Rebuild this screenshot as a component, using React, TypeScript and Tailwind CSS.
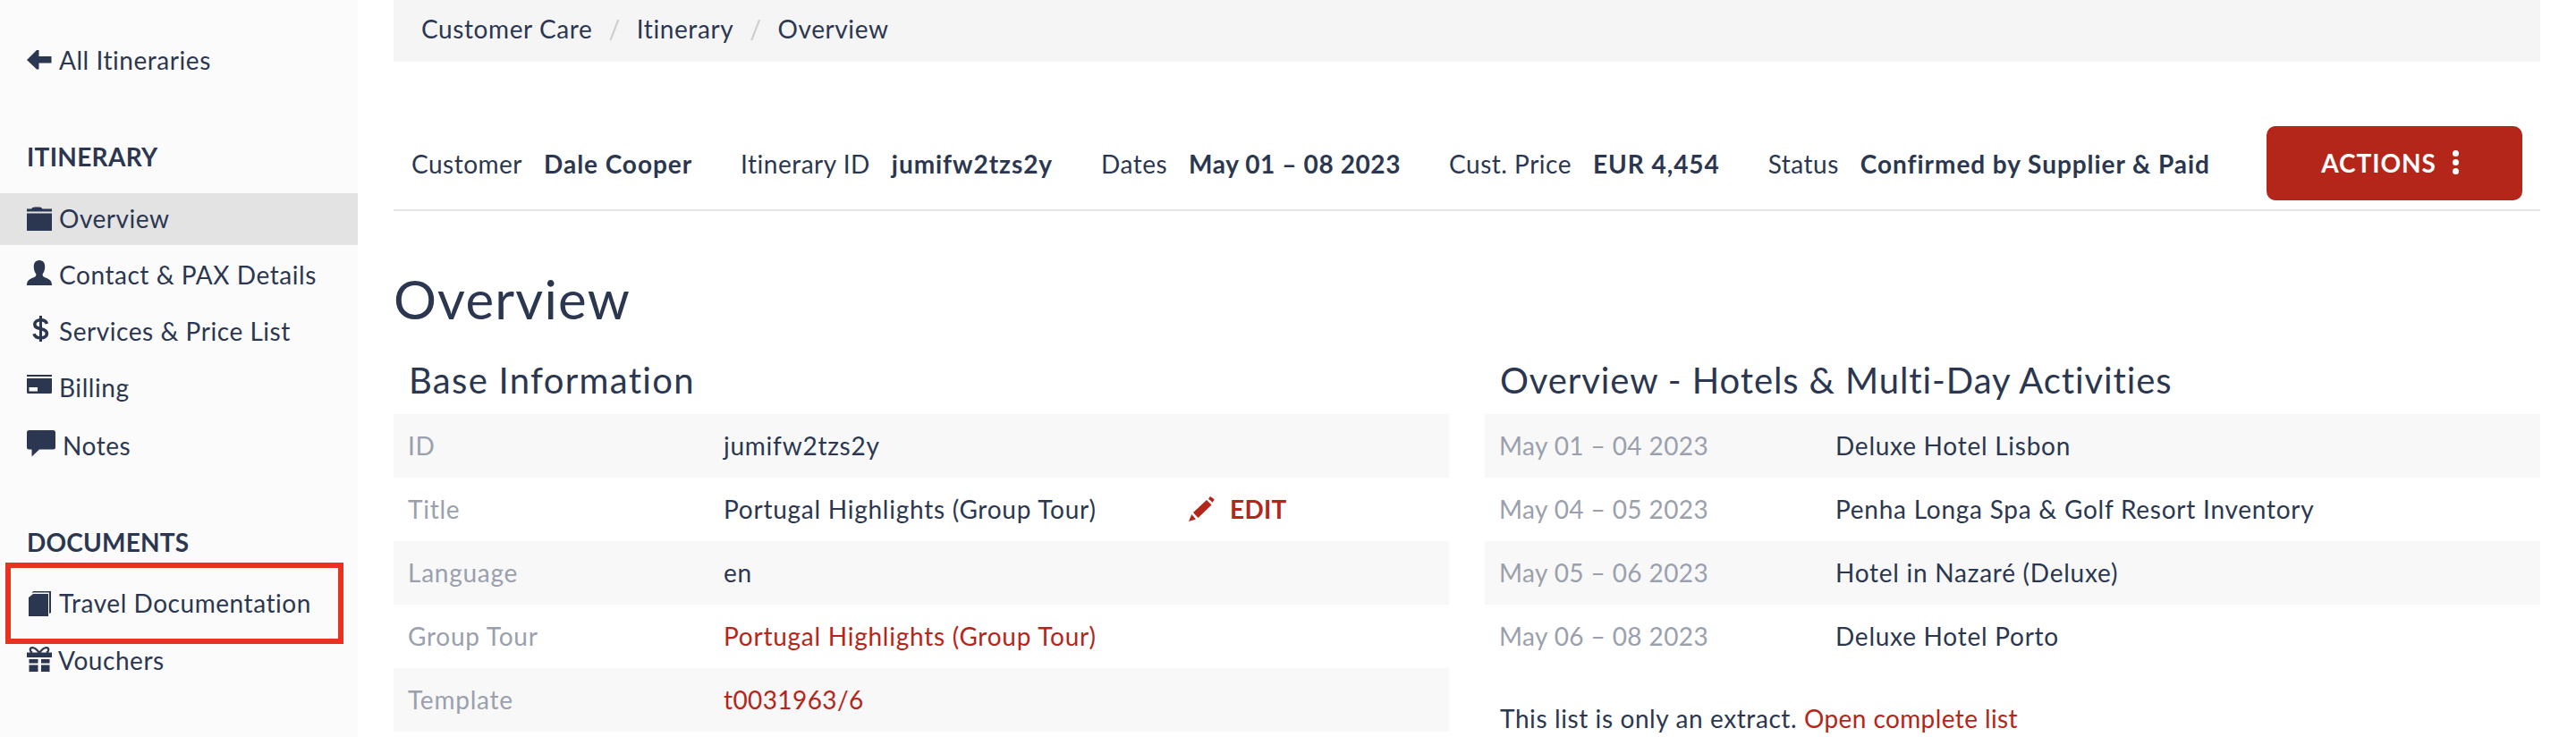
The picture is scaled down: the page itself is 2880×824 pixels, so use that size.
import React from "react";

const FONT = "font-['Lato','Noto_Sans',sans-serif]";

// glyph-style icons, drawn on a 28px grid
function ArrowIcon() {
  return (
    <svg width="28" height="24" viewBox="0 0 28 24" className="fill-[#2b3750]">
      <path d="M0 12 L11 1 L13.5 1 L13.5 8 L27.5 8 L27.5 15.5 L13.5 15.5 L13.5 22.5 L11 22.5 Z" />
    </svg>
  );
}
function FolderIcon() {
  return (
    <svg width="28" height="28" viewBox="0 0 28 28" className="fill-[#2b3750]">
      <path d="M0 7.5 H28 V27 H0 Z" />
      <path d="M0 2.5 H5 Q6 0.5 9 0.5 H14 Q16.5 0.5 17.5 2.5 H28 V5.5 H0 Z" />
    </svg>
  );
}
function UserIcon() {
  return (
    <svg width="28" height="28" viewBox="0 0 28 28" className="fill-[#2b3750]">
      <path d="M14 0 C19 0 20.5 4 20.2 8 C20 11 19 13.5 17.6 15.5 C17.4 17.5 18.5 18.5 21 19.5 C25 21 28 22.5 28 28 H0 C0 22.5 3 21 7 19.5 C9.5 18.5 10.6 17.5 10.4 15.5 C9 13.5 8 11 7.8 8 C7.5 4 9 0 14 0 Z" />
    </svg>
  );
}
function DollarIcon() {
  return (
    <svg width="28" height="29" viewBox="-1 0 28 29" className="fill-none stroke-[#2b3750]">
      <path d="M21.5 9 C20.5 6 17.5 4.8 14.5 4.8 C10.5 4.8 7.8 6.8 7.8 9.8 C7.8 13 11 13.8 14.5 14.6 C18 15.4 21.4 16.6 21.4 20 C21.4 23 18.5 24.8 14.5 24.8 C11 24.8 8 23.4 7 20.2" strokeWidth="3.6" />
      <path d="M14.5 0 V29" strokeWidth="3" />
    </svg>
  );
}
function CardIcon() {
  return (
    <svg width="28" height="21" viewBox="0 0 28 21" className="fill-[#2b3750]">
      <path d="M0 0 H28 V2 H0 Z" />
      <path fillRule="evenodd" d="M0 4 H28 V19.5 Q28 21 26.5 21 H1.5 Q0 21 0 19.5 Z M2.5 14 V18.5 H12 V14 Z" />
    </svg>
  );
}
function CommentIcon() {
  return (
    <svg width="32" height="30" viewBox="0 0 32 30" className="fill-[#2b3750]">
      <path d="M2.5 0 H29.5 Q32 0 32 2.5 V19 Q32 21.5 29.5 21.5 H14 L5.5 29.5 V21.5 H2.5 Q0 21.5 0 19 V2.5 Q0 0 2.5 0 Z" />
    </svg>
  );
}
function BookIcon() {
  return (
    <svg width="26" height="28" viewBox="0 0 26 28" className="fill-[#2b3750]">
      <path d="M0 7 L5 3 H22 V28 H0 Z" />
      <path d="M3.5 2 L5 0 H25 V24 L23 25 V1.5 H5 Z" />
    </svg>
  );
}
function GiftIcon() {
  return (
    <svg width="28" height="28" viewBox="0 0 28 28" className="fill-[#2b3750]">
      <path d="M2.5 14 H12.5 V18.5 H2.5 Z M16 14 H25.5 V18.5 H16 Z M2.5 20.5 H12.5 V28 H2.5 Z M16 20.5 H25.5 V28 H16 Z" />
      <path d="M0 6.5 H28 V12 H0 Z" />
      <path d="M14 7 C11 3 8 1 6 1.2 C3 1.5 3 5 6 6.5 M14 7 C17 3 20 1 22 1.2 C25 1.5 25 5 22 6.5" fill="none" stroke="#2b3750" strokeWidth="2.2" />
    </svg>
  );
}
function PencilIcon() {
  return (
    <svg width="29" height="28" viewBox="0 0 29 28" className="fill-[#b5261a]">
      <path d="M0 28 L3.3 20 L8 25.6 Z" />
      <path d="M5 18 L20 4 L25.5 9.5 L10.5 24 Z" />
      <path d="M22 2.7 L24 0 L28.7 3.3 L26.7 6.7 Z" />
    </svg>
  );
}

function NavItem({ icon, label, active, slot = "w-[28px]", extra = "" }: { icon: React.ReactNode; label: string; active?: boolean; slot?: string; extra?: string }) {
  return (
    <div className={`flex h-[58px] items-center gap-2 pl-[30px] ${extra} ${active ? "bg-[#e3e3e3]" : ""}`}>
      <span className={`flex ${slot} justify-center`}>{icon}</span>
      <span className="pb-[2px]">{label}</span>
    </div>
  );
}

function Sidebar() {
  return (
    <aside className="h-[824px] w-[400px] shrink-0 bg-[#fbfbfb] text-[28px] leading-none tracking-[0.55px]">
      <div className="flex h-[134px] items-center gap-2 pl-[30px]">
        <ArrowIcon />
        <span>All Itineraries</span>
      </div>
      <h3 className="flex h-[82px] items-start pl-[30px] pt-[27px] font-bold tracking-[0.3px]">ITINERARY</h3>
      <div className="flex flex-col gap-[5px]">
        <NavItem active icon={<FolderIcon />} label="Overview" />
        <NavItem icon={<UserIcon />} label="Contact & PAX Details" slot="w-[28px] pb-[6px]" />
        <NavItem icon={<DollarIcon />} label="Services & Price List" slot="w-[28px] pb-[8px]" />
        <NavItem icon={<CardIcon />} label="Billing" slot="w-[28px] pb-[9px]" />
        <NavItem icon={<CommentIcon />} label="Notes" slot="w-[32px] pb-[6px]" extra="mt-[2px]" />
      </div>
      <h3 className="flex h-[101px] items-start pl-[30px] pt-[64px] font-bold tracking-[0.2px]">DOCUMENTS</h3>
      <div className="mx-[6px] flex h-[91px] w-[378px] items-center gap-2 border-[6px] border-[#e8321f] pl-[20px]">
        <BookIcon />
        <span className="pb-[2px]">Travel Documentation</span>
      </div>
      <div className="flex h-[38px] items-center gap-[7px] pl-[30px]">
        <span className="flex pb-[4px]"><GiftIcon /></span>
        <span className="pb-[2px]">Vouchers</span>
      </div>
    </aside>
  );
}

function Meta({ label, value, tight }: { label: string; value: string; tight?: boolean }) {
  return (
    <div className="flex gap-[24px] whitespace-nowrap">
      <span className="tracking-[0.5px]">{label}</span>
      <span className={`font-bold ${tight ? "tracking-[0.6px]" : "tracking-[0.95px]"}`}>{value}</span>
    </div>
  );
}

function Row({ label, children, shaded, col }: { label: string; children: React.ReactNode; shaded: boolean; col: string }) {
  return (
    <div className={`flex h-[71px] items-center pb-[2px] pl-[16px] ${shaded ? "bg-[#f8f8f8]" : ""}`}>
      <span className={`${col} shrink-0 text-[#9aa0ad]`}>{label}</span>
      {children}
    </div>
  );
}

export default function App() {
  const hotels = [
    ["May 01 – 04 2023", "Deluxe Hotel Lisbon"],
    ["May 04 – 05 2023", "Penha Longa Spa & Golf Resort Inventory"],
    ["May 05 – 06 2023", "Hotel in Nazaré (Deluxe)"],
    ["May 06 – 08 2023", "Deluxe Hotel Porto"],
  ];

  return (
    <div className={`flex h-[824px] gap-[40px] overflow-hidden bg-white text-[#2b3750] ${FONT}`}>
      <Sidebar />
      <main className="w-[2400px] shrink-0 text-[28px] leading-none tracking-[0.75px]">
        <nav className="flex h-[69px] items-center bg-[#f5f5f5] pb-[5px] pl-[31px] tracking-[0.6px]">
          <span>Customer Care</span>
          <span className="mx-[18px] text-[#cccccc]">/</span>
          <span>Itinerary</span>
          <span className="mx-[18px] text-[#cccccc]">/</span>
          <span>Overview</span>
        </nav>

        <div className="flex items-center gap-[54px] border-b-2 border-[#e5e5e5] pb-[10px] pl-[20px] pr-[20px] pt-[72px]">
          <Meta label="Customer" value="Dale Cooper" />
          <Meta label="Itinerary ID" value="jumifw2tzs2y" />
          <Meta label="Dates" value="May 01 – 08 2023" tight />
          <Meta label="Cust. Price" value="EUR 4,454" />
          <Meta label="Status" value="Confirmed by Supplier & Paid" />
          <button className="ml-auto flex h-[83px] w-[286px] shrink-0 items-center justify-center gap-[18px] rounded-[10px] bg-[#b5261a] pb-[2px] pr-[10px] font-bold tracking-[0.95px] text-white">
            ACTIONS
            <span className="flex flex-col gap-[3px]">
              <i className="block h-[7px] w-[7px] rounded-full bg-white" />
              <i className="block h-[7px] w-[7px] rounded-full bg-white" />
              <i className="block h-[7px] w-[7px] rounded-full bg-white" />
            </span>
          </button>
        </div>

        <h1 className="mt-[62px] flex h-[72px] items-center text-[60px] tracking-[1.2px]">Overview</h1>

        <div className="mt-[25px] grid grid-cols-2 gap-[40px]">
          <section>
            <h2 className="flex h-[68px] items-center pb-[8px] pl-[17px] text-[40px] tracking-[1.3px]">Base Information</h2>
            <Row label="ID" shaded col="w-[353px]"><span>jumifw2tzs2y</span></Row>
            <Row label="Title" shaded={false} col="w-[353px]">
              <span className="w-[520px] shrink-0">Portugal Highlights (Group Tour)</span>
              <span className="flex items-center gap-[17px] font-bold tracking-[0.3px] text-[#b5261a]">
                <PencilIcon />
                EDIT
              </span>
            </Row>
            <Row label="Language" shaded col="w-[353px]"><span>en</span></Row>
            <Row label="Group Tour" shaded={false} col="w-[353px]"><span className="text-[#b5261a]">Portugal Highlights (Group Tour)</span></Row>
            <Row label="Template" shaded col="w-[353px]"><span className="tracking-[0.4px] text-[#b5261a]">t0031963/6</span></Row>
          </section>

          <section>
            <h2 className="flex h-[68px] items-center pb-[8px] pl-[17px] text-[40px] tracking-[0.9px]">Overview - Hotels &amp; Multi-Day Activities</h2>
            {hotels.map(([dates, name], i) => (
              <Row key={dates} label={dates} shaded={i % 2 === 0} col="w-[376px] tracking-[0.4px]">
                <span>{name}</span>
              </Row>
            ))}
            <p className="pl-[17px] pt-[42px] tracking-[0.6px]">
              This list is only an extract. <span className="tracking-[0.4px] text-[#b5261a]">Open complete list</span>
            </p>
          </section>
        </div>
      </main>
    </div>
  );
}
